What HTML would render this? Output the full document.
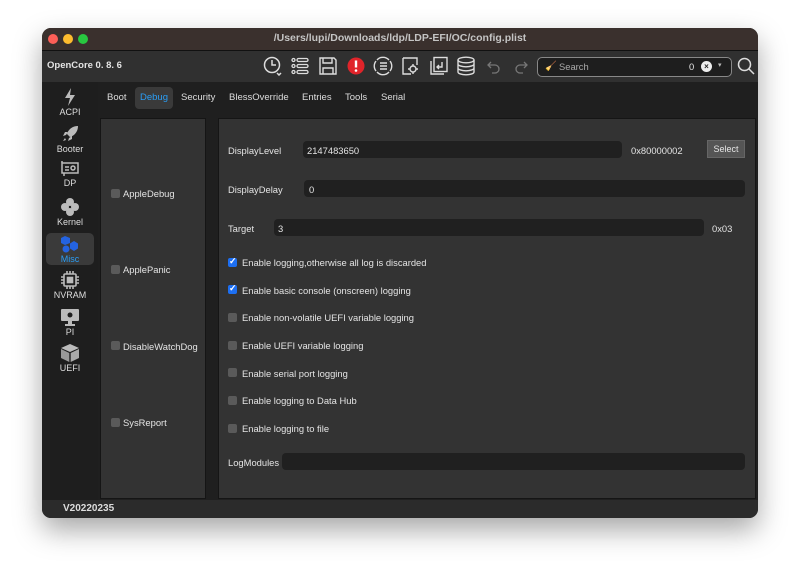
<!DOCTYPE html>
<html><head><style>
body{margin:0;width:800px;height:573px;background:#fff;font-family:"Liberation Sans",sans-serif;position:relative;overflow:hidden}
.win{position:absolute;left:42px;top:28px;width:716px;height:490px;border-radius:9px;background:#2c2c2c;box-shadow:0 12px 28px rgba(0,0,0,.35);overflow:hidden}
.title{position:absolute;left:0;top:0;width:100%;height:22px;background:#3a302d;border-bottom:1px solid #111;color:#c4c4c4;font-size:10.5px;font-weight:bold;text-align:center;line-height:21px}
.dot{position:absolute;top:6px;width:10px;height:10px;border-radius:50%}
.tb{position:absolute;left:0;top:23px;width:100%;height:31px;background:#303030}
.side{position:absolute;left:0;top:54px;width:56px;height:418px;background:#1e1e1e}
.main{position:absolute;left:56px;top:54px;width:660px;height:418px;background:#1f1f1f}
.status{position:absolute;left:0;top:472px;width:100%;height:18px;background:#2b2b2b;color:#ddd;font-size:10px;font-weight:bold;line-height:18px}
.si{position:absolute;left:0;width:56px;text-align:center;color:#ddd;font-size:9px}
.si svg{display:block;margin:0 auto 1px}
.tab{position:absolute;top:10px;font-size:9.5px;color:#ddd}
.panel{position:absolute;background:#333;border:1px solid #151515}
.t{position:absolute;font-size:9.4px;color:#e4e4e4;white-space:nowrap}
.cb{position:absolute;width:9px;height:9px;border-radius:2px;background:#5a5a5a}
.cb.on{background:#1d6ff2}
.cb.on:after{content:"✓";color:#fff;font-size:9px;position:absolute;left:1px;top:-2px;font-weight:bold}
.in{position:absolute;height:17px;border-radius:4px;background:#202020}
.tb svg{position:absolute;top:5px}
</style></head><body>
<div class="win">
<div class="title">/Users/lupi/Downloads/ldp/LDP-EFI/OC/config.plist
<div class="dot" style="left:6px;background:#fe5f57"></div><div class="dot" style="left:21px;background:#febc2e"></div><div class="dot" style="left:36px;background:#28c840"></div></div>
<div class="tb">
<div class="t" style="left:5px;top:9px;font-weight:bold;font-size:9.5px">OpenCore 0. 8. 6</div>
<svg style="left:221px" width="20" height="20" viewBox="0 0 20 20" fill="none" stroke="#ddd" stroke-width="1.5"><circle cx="9" cy="9" r="7.5"/><path d="M9 4v5h4M14 17l2 2 2-2"/></svg>
<svg style="left:249px" width="18" height="20" viewBox="0 0 18 20" fill="none" stroke="#ddd" stroke-width="1.3"><circle cx="2.5" cy="4" r="1.5"/><circle cx="2.5" cy="10" r="1.5"/><circle cx="2.5" cy="16" r="1.5"/><rect x="6" y="2.5" width="11" height="3" rx="1.5"/><rect x="6" y="8.5" width="11" height="3" rx="1.5"/><rect x="6" y="14.5" width="11" height="3" rx="1.5"/></svg>
<svg style="left:277px" width="18" height="20" viewBox="0 0 18 20" fill="none" stroke="#ddd" stroke-width="1.4"><path d="M1 2h14l2 2v14H1z"/><path d="M4 2v5h9V2M4 18v-6h10v6"/></svg>
<svg style="left:305px" width="18" height="20" viewBox="0 0 18 20"><circle cx="9" cy="10" r="8.5" fill="#e0242a"/><path d="M9 4.5v7" stroke="#fff" stroke-width="2.4"/><circle cx="9" cy="14.5" r="1.3" fill="#fff"/></svg>
<svg style="left:331px" width="20" height="20" viewBox="0 0 20 20" fill="none" stroke="#ddd" stroke-width="1.4"><path d="M4 4a8 8 0 0 1 12 0M16 16a8 8 0 0 1-12 0M3 5a8 8 0 0 0 0 10M17 5a8 8 0 0 1 0 10"/><path d="M7 7h7M7 10h7M7 13h7"/></svg>
<svg style="left:359px" width="20" height="20" viewBox="0 0 20 20" fill="none" stroke="#ddd" stroke-width="1.4"><path d="M2 2h14v7M2 2v16h8"/><circle cx="12" cy="13" r="3"/><path d="M12 8v2M12 16v2M7 13h2M15 13h2"/></svg>
<svg style="left:387px" width="20" height="20" viewBox="0 0 20 20" fill="none" stroke="#ddd" stroke-width="1.4"><rect x="5" y="1.5" width="13" height="14"/><path d="M2 5v13h13"/><path d="M13 6v5H8M10 9l-2 2 2 2"/></svg>
<svg style="left:415px" width="18" height="20" viewBox="0 0 18 20" fill="none" stroke="#ddd" stroke-width="1.4"><ellipse cx="9" cy="4" rx="8" ry="2.8"/><path d="M1 4v12c0 1.5 3.6 2.8 8 2.8s8-1.3 8-2.8V4M1 8c0 1.5 3.6 2.8 8 2.8S17 9.5 17 8M1 12c0 1.5 3.6 2.8 8 2.8s8-1.3 8-2.8"/></svg>
<svg style="left:444px" width="16" height="20" viewBox="0 0 16 20" fill="none" stroke="#777" stroke-width="1.3"><path d="M5 6L2 9l3 3M2 9h7a4 4 0 0 1 0 8H6"/></svg>
<svg style="left:471px" width="16" height="20" viewBox="0 0 16 20" fill="none" stroke="#777" stroke-width="1.3"><path d="M11 6l3 3-3 3M14 9H7a4 4 0 0 0 0 8h3"/></svg>
<div style="position:absolute;left:495px;top:6px;width:193px;height:18px;border:1px solid #888;border-radius:5px;background:#1e1e1e"></div>
<div class="t" style="left:503px;top:9px;color:#e8b400">🧹</div>
<div class="t" style="left:517px;top:10px;color:#aaa">Search</div>
<div class="t" style="left:647px;top:10px">0</div>
<div style="position:absolute;left:659px;top:10px;width:11px;height:11px;border-radius:50%;background:#eee;color:#222;font-size:8px;font-weight:bold;text-align:center;line-height:11px">×</div>
<div class="t" style="left:676px;top:10px;font-size:7px;color:#bbb">▾</div>
<svg style="left:695px;top:6px" width="18" height="18" viewBox="0 0 18 18" fill="none" stroke="#ddd" stroke-width="1.5"><circle cx="7.5" cy="7.5" r="6"/><path d="M12 12l5 5"/></svg>
</div>
<div class="side">
<div class="si" style="top:6px"><svg width="16" height="18" viewBox="0 0 16 18"><path d="M9 0L3 10h5l-2 8 7-11H8z" fill="#bbb"/></svg>ACPI</div>
<div class="si" style="top:43px"><svg width="18" height="18" viewBox="0 0 18 18"><path d="M17 1c-6 0-10 4-11 8l3 3c4-1 8-5 8-11zM5 10l-3 1 2-4h3zM8 13l-1 3 4-2v-3zM4 13l-2 3 3-1" fill="#bbb"/></svg>Booter</div>
<div class="si" style="top:79px"><svg width="20" height="16" viewBox="0 0 20 16" fill="none" stroke="#bbb" stroke-width="1.5"><rect x="2" y="2" width="16" height="10"/><circle cx="13" cy="7" r="2"/><path d="M5 6h4M5 9h4M4 12v3M2 0v2"/></svg>DP</div>
<div class="si" style="top:116px"><svg width="18" height="18" viewBox="0 0 18 18" fill="#bbb"><circle cx="9" cy="4" r="4"/><circle cx="9" cy="14" r="4"/><circle cx="4" cy="9" r="4"/><circle cx="14" cy="9" r="4"/></svg>Kernel</div>
<div style="position:absolute;left:4px;top:151px;width:48px;height:32px;border-radius:5px;background:#3a3a3a"></div>
<div class="si" style="top:153px;color:#2a9df4"><svg width="18" height="18" viewBox="0 0 18 18" fill="#2463e0"><path d="M4 1l5 2v5L4 10 0 8V3z"/><circle cx="5" cy="14" r="3.5"/><path d="M13 6l4 2.5v5L13 16l-4-2.5v-5z"/></svg>Misc</div>
<div class="si" style="top:189px"><svg width="20" height="18" viewBox="0 0 20 18" fill="none" stroke="#bbb" stroke-width="1.6"><rect x="4" y="3" width="12" height="12" rx="1"/><rect x="7.5" y="6.5" width="5" height="5" fill="#bbb"/><path d="M7 0v3M10 0v3M13 0v3M7 15v3M10 15v3M13 15v3M1 6h3M1 9h3M1 12h3M16 6h3M16 9h3M16 12h3"/></svg>NVRAM</div>
<div class="si" style="top:226px"><svg width="20" height="18" viewBox="0 0 20 18" fill="#bbb"><rect x="1" y="1" width="18" height="12" rx="1"/><rect x="8" y="13" width="4" height="3"/><rect x="5" y="16" width="10" height="2"/><circle cx="10" cy="7" r="2.5" fill="#1e1e1e"/></svg>PI</div>
<div class="si" style="top:262px"><svg width="20" height="18" viewBox="0 0 20 18" fill="#bbb"><path d="M10 0l9 4-9 4-9-4z"/><path d="M1 5l8.3 4v9L1 14z" fill="#999"/><path d="M19 5l-8.3 4v9l8.3-4z" fill="#aaa"/></svg>UEFI</div>
</div>
<div class="main">
<div class="tab" style="left:9px">Boot</div>
<div style="position:absolute;left:37px;top:5px;width:38px;height:22px;border-radius:4px;background:#3a3a3a"></div>
<div class="tab" style="left:42px;color:#2a9df4">Debug</div>
<div class="tab" style="left:83px">Security</div>
<div class="tab" style="left:131px">BlessOverride</div>
<div class="tab" style="left:204px">Entries</div>
<div class="tab" style="left:247px">Tools</div>
<div class="tab" style="left:283px">Serial</div>
<div class="panel" style="left:2px;top:36px;width:104px;height:379px"></div>
<div class="panel" style="left:120px;top:36px;width:536px;height:379px"></div>
</div>
<div class="status"><span style="margin-left:21px">V20220235</span></div>
</div>
<div class="cb" style="left:111px;top:189px"></div><div class="t" style="left:123px;top:188px">AppleDebug</div>
<div class="cb" style="left:111px;top:265px"></div><div class="t" style="left:123px;top:264px">ApplePanic</div>
<div class="cb" style="left:111px;top:341px"></div><div class="t" style="left:123px;top:341px">DisableWatchDog</div>
<div class="cb" style="left:111px;top:418px"></div><div class="t" style="left:123px;top:417px">SysReport</div>
<div class="t" style="left:228px;top:145px">DisplayLevel</div>
<div class="in" style="left:303px;top:141px;width:319px"></div><div class="t" style="left:307px;top:145px">2147483650</div>
<div class="t" style="left:631px;top:145px">0x80000002</div>
<div style="position:absolute;left:707px;top:140px;width:38px;height:18px;background:#555;border:1px solid #666;box-sizing:border-box;color:#e4e4e4;font-size:9px;text-align:center;line-height:16px">Select</div>
<div class="t" style="left:228px;top:184px">DisplayDelay</div>
<div class="in" style="left:304px;top:180px;width:441px"></div><div class="t" style="left:309px;top:184px">0</div>
<div class="t" style="left:228px;top:223px">Target</div>
<div class="in" style="left:274px;top:219px;width:430px"></div><div class="t" style="left:278px;top:223px">3</div>
<div class="t" style="left:712px;top:223px">0x03</div>
<div class="cb on" style="left:228px;top:258px"></div><div class="t" style="left:242px;top:257px">Enable logging,otherwise all log is discarded</div>
<div class="cb on" style="left:228px;top:285px"></div><div class="t" style="left:242px;top:285px">Enable basic console (onscreen) logging</div>
<div class="cb" style="left:228px;top:313px"></div><div class="t" style="left:242px;top:312px">Enable non-volatile UEFI variable logging</div>
<div class="cb" style="left:228px;top:341px"></div><div class="t" style="left:242px;top:340px">Enable UEFI variable logging</div>
<div class="cb" style="left:228px;top:368px"></div><div class="t" style="left:242px;top:368px">Enable serial port logging</div>
<div class="cb" style="left:228px;top:396px"></div><div class="t" style="left:242px;top:395px">Enable logging to Data Hub</div>
<div class="cb" style="left:228px;top:424px"></div><div class="t" style="left:242px;top:423px">Enable logging to file</div>
<div class="t" style="left:228px;top:457px">LogModules</div>
<div class="in" style="left:282px;top:453px;width:463px"></div>
</body></html>
